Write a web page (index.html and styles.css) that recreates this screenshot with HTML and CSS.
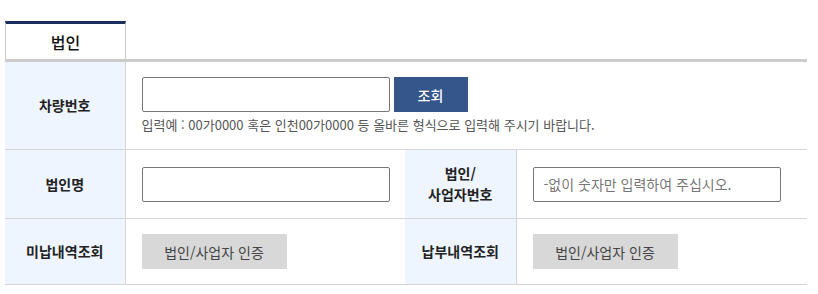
FILE: index.html
```html
<!DOCTYPE html>
<html lang="ko">
<head>
    <link rel="stylesheet" href="styles.css">
    <meta charset="utf-8" />
    <title>법인 조회</title>
</head>
<body>

<div class="wrap">
    <!-- tab -->
    <div class="tabs">
        <div class="tab active">법인</div>
    </div>

    <table class="form-table">
        <colgroup>
            <col class="col-th">
            <col class="col-td">
            <col class="col-th2">
            <col>
        </colgroup>
        <tr class="row-car">
            <th>차량번호</th>
            <td colspan="3">
                <div class="search-line">
                    <input type="text" class="inp">
                    <button type="button" class="btn-search">조회</button>
                </div>
                <p class="help">입력예 : 00가0000 혹은 인천00가0000 등 올바른 형식으로 입력해 주시기 바랍니다.</p>
            </td>
        </tr>
        <tr class="row-name">
            <th>법인명</th>
            <td><input type="text" class="inp"></td>
            <th>법인/<br>사업자번호</th>
            <td><input type="text" class="inp" placeholder="-없이 숫자만 입력하여 주십시오."></td>
        </tr>
        <tr class="row-auth">
            <th>미납내역조회</th>
            <td><button type="button" class="btn-auth">법인/사업자 인증</button></td>
            <th>납부내역조회</th>
            <td><button type="button" class="btn-auth">법인/사업자 인증</button></td>
        </tr>
    </table>
</div>

</body>
</html>
```

FILE: styles.css
```css
body {
    margin: 0;
    background: #fff;
    font-family: "Noto Sans CJK KR", "Noto Sans", sans-serif;
    color: #222;
}

.wrap {
    width: 802px;
    padding: 21px 0 0 5px;
}

/* tab */
.tabs {
    display: flex;
}

.tab {
    width: 119px;
    height: 35px;
    border-top: 3px solid #1b2f5c;
    border-left: 1px solid #ccc;
    border-right: 1px solid #ccc;
    display: flex;
    align-items: center;
    justify-content: center;
    font-size: 16px;
    font-weight: 500;
    color: #111;
}

/* table */
.form-table {
    width: 802px;
    border-collapse: collapse;
    border-top: 3px solid #cccccc;
    table-layout: fixed;
}

.col-th { width: 120px; }
.col-td { width: 280px; }
.col-th2 { width: 111px; }

.form-table th {
    background: #eef5ff;
    border-right: 1px solid #d5d5d5;
    border-bottom: 1px solid #d5d5d5;
    font-size: 14px;
    font-weight: 700;
    color: #222;
    line-height: 21px;
    padding: 0;
}

.form-table td {
    border-bottom: 1px solid #d5d5d5;
    padding: 0 0 0 16px;
    vertical-align: middle;
}

.row-car { height: 89px; }
.row-name { height: 69px; }
.row-auth { height: 66px; }

.row-car td {
    vertical-align: top;
    padding-top: 15px;
}

.search-line {
    display: flex;
    gap: 4px;
}

.inp {
    width: 248px;
    height: 35px;
    box-sizing: border-box;
    border: 1px solid #777;
    border-radius: 2px;
    padding: 0 10px;
    font-family: "Noto Sans CJK KR", sans-serif;
    font-size: 14px;
    color: #222;
    margin: 0;
}

.inp::placeholder {
    color: #777;
}

.btn-search {
    width: 74px;
    height: 35px;
    border: none;
    background: #35568a;
    color: #fff;
    font-family: "Noto Sans CJK KR", sans-serif;
    font-size: 14px;
    font-weight: 500;
    padding: 0;
}

.help {
    margin: 3px 0 0;
    font-size: 13px;
    color: #555;
    line-height: 19px;
}

.btn-auth {
    width: 145px;
    height: 35px;
    border: none;
    background: #d8d8d8;
    color: #444;
    font-family: "Noto Sans CJK KR", sans-serif;
    font-size: 14px;
    padding: 0;
}
```
